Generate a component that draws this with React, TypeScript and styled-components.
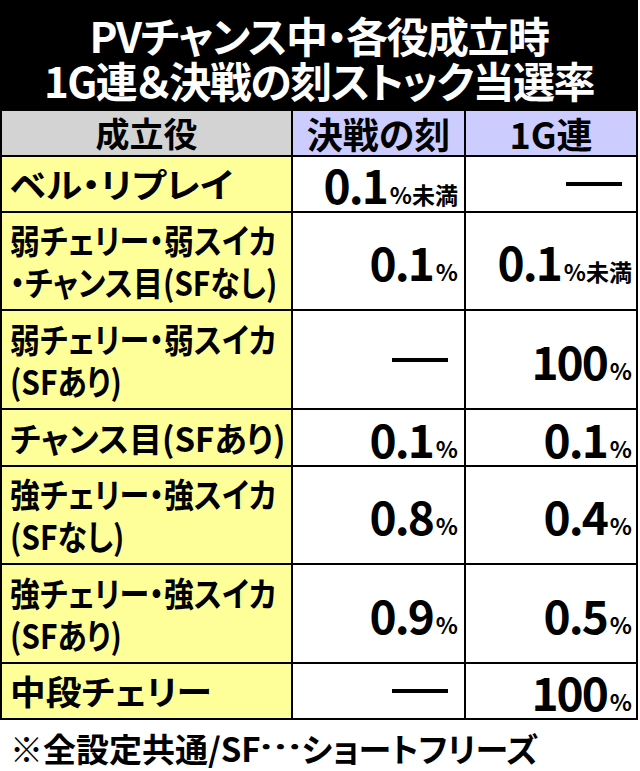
import { Fragment } from 'react';
import styled, { createGlobalStyle } from 'styled-components';

const GlobalStyle = createGlobalStyle`
  html, body {
    margin: 0;
    padding: 0;
    background: #fff;
  }
  body {
    font-family: "Noto Sans CJK JP", "Noto Sans", sans-serif;
    font-weight: 700;
    color: #000;
  }
`;

const Page = styled.div`
  width: 640px;
  height: 771px;
  background: #fff;
  overflow: hidden;
`;

const Board = styled.div`
  width: 638px;
  box-sizing: border-box;
  padding: 0 2px 2px;
  background: #000;
  display: flex;
  flex-direction: column;
  gap: 2px;
`;

const Title = styled.h1`
  margin: 0;
  height: 109px;
  box-sizing: border-box;
  padding-top: 12px;
  color: #fff;
  font-size: 42px;
  line-height: 45px;
  font-weight: 700;
  text-align: center;
  letter-spacing: -1.5px;
  font-feature-settings: "palt";
`;

const Grid = styled.div`
  display: grid;
  grid-template-columns: 289px 171px 170px;
  grid-template-rows: 44px 54px 96px 97px 55px 96px 97px 54px;
  gap: 2px;
`;

const HeadCell = styled.div<{ $blue?: boolean; $size: number }>`
  display: flex;
  align-items: center;
  justify-content: center;
  background: ${(p) => (p.$blue ? '#ccccff' : '#d3d3d3')};
  font-size: ${(p) => p.$size}px;
  line-height: 1;
  font-feature-settings: "palt";
`;

const LabelCell = styled.div`
  display: flex;
  flex-direction: column;
  justify-content: center;
  align-items: flex-start;
  padding-left: 8px;
  background: #ffff99;
  font-size: 34px;
  line-height: 42px;
  font-feature-settings: "palt";
  white-space: nowrap;
  overflow: hidden;
`;

const LabelLine = styled.span<{ $squeeze: number }>`
  display: inline-block;
  transform: scaleX(${(p) => p.$squeeze});
  transform-origin: left center;
`;

const ValueCell = styled.div<{ $pad: number }>`
  display: flex;
  align-items: center;
  justify-content: flex-end;
  padding-right: ${(p) => p.$pad}px;
  background: #fff;
  white-space: nowrap;
`;

const Amount = styled.span`
  line-height: 1;
`;

const Number = styled.span`
  font-size: 46px;
  letter-spacing: -2px;
`;

const Unit = styled.span`
  font-size: 23px;
  margin-left: 3px;
`;

const Dash = styled.span`
  display: block;
  width: 56px;
  height: 4px;
  background: #000;
  margin-right: 10px;
`;

const Footer = styled.p`
  margin: 0;
  padding: 8px 0 0 10px;
  font-size: 33px;
  line-height: 40px;
  font-feature-settings: "palt";
  white-space: nowrap;
`;

const Ellipsis = styled.span`
  display: inline-block;
  margin: 0 5px 0 3px;
  transform: scaleX(1.3) translateY(-3px);
  font-feature-settings: normal;
`;

type Rate = { num: string; unit: string } | null;

type Row = {
  label: string[];
  squeeze: number;
  kessen: Rate;
  renchan: Rate;
};

const rows: Row[] = [
  { label: ['ベル・リプレイ'], squeeze: 1.08, kessen: { num: '0.1', unit: '%未満' }, renchan: null },
  {
    label: ['弱チェリー・弱スイカ', '・チャンス目(SFなし)'],
    squeeze: 0.88,
    kessen: { num: '0.1', unit: '%' },
    renchan: { num: '0.1', unit: '%未満' },
  },
  {
    label: ['弱チェリー・弱スイカ', '(SFあり)'],
    squeeze: 0.88,
    kessen: null,
    renchan: { num: '100', unit: '%' },
  },
  {
    label: ['チャンス目(SFあり)'],
    squeeze: 0.97,
    kessen: { num: '0.1', unit: '%' },
    renchan: { num: '0.1', unit: '%' },
  },
  {
    label: ['強チェリー・強スイカ', '(SFなし)'],
    squeeze: 0.88,
    kessen: { num: '0.8', unit: '%' },
    renchan: { num: '0.4', unit: '%' },
  },
  {
    label: ['強チェリー・強スイカ', '(SFあり)'],
    squeeze: 0.88,
    kessen: { num: '0.9', unit: '%' },
    renchan: { num: '0.5', unit: '%' },
  },
  { label: ['中段チェリー'], squeeze: 1.05, kessen: null, renchan: { num: '100', unit: '%' } },
];

function RateValue({ rate }: { rate: Rate }) {
  if (!rate) return <Dash />;
  return (
    <Amount>
      <Number>{rate.num}</Number>
      <Unit>{rate.unit}</Unit>
    </Amount>
  );
}

export default function App() {
  return (
    <Page>
      <GlobalStyle />
      <Board>
        <Title>
          PVチャンス中・各役成立時
          <br />
          1G連＆決戦の刻ストック当選率
        </Title>
        <Grid>
          <HeadCell $size={34}>成立役</HeadCell>
          <HeadCell $blue $size={36}>決戦の刻</HeadCell>
          <HeadCell $blue $size={36}>1G連</HeadCell>
          {rows.map((row) => (
            <Fragment key={row.label.join('/')}>
              <LabelCell>
                {row.label.map((line) => (
                  <LabelLine key={line} $squeeze={row.squeeze}>
                    {line}
                  </LabelLine>
                ))}
              </LabelCell>
              <ValueCell $pad={6}>
                <RateValue rate={row.kessen} />
              </ValueCell>
              <ValueCell $pad={4}>
                <RateValue rate={row.renchan} />
              </ValueCell>
            </Fragment>
          ))}
        </Grid>
      </Board>
      <Footer>
        ※全設定共通/SF<Ellipsis>…</Ellipsis>ショートフリーズ
      </Footer>
    </Page>
  );
}
